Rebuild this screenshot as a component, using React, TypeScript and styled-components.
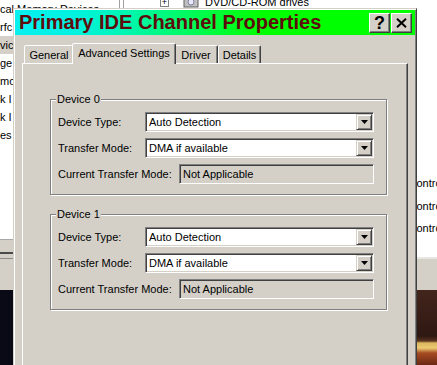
import React from "react";
import styled, { createGlobalStyle } from "styled-components";

const GlobalStyle = createGlobalStyle`
  html, body {
    margin: 0;
    padding: 0;
  }
  body {
    width: 437px;
    height: 365px;
    overflow: hidden;
    font-family: "Liberation Sans", Arial, sans-serif;
    font-size: 11px;
    color: #000;
  }
`;

interface IDeviceRow {
  label: string;
  value: string;
  boxWidth: number;
  readOnly?: boolean;
}

const devices: { name: string; rows: IDeviceRow[] }[] = [0, 1].map((i) => ({
  name: `Device ${i}`,
  rows: [
    { label: "Device Type:", value: "Auto Detection", boxWidth: 229 },
    { label: "Transfer Mode:", value: "DMA if available", boxWidth: 229 },
    { label: "Current Transfer Mode:", value: "Not Applicable", boxWidth: 195, readOnly: true },
  ],
}));

const leftItems = ["cal Memory Devices", "rfc", "vic", "ge", "mo", "k I", "k I", "es"];
const tabs = ["General", "Advanced Settings", "Driver", "Details"];
const tabWidths = [50, 100, 44, 43];

const DropArrow = () => (
  <svg width="7" height="4" viewBox="0 0 7 4">
    <polygon points="0,0 7,0 3.5,4" fill="#000" />
  </svg>
);

const CloseGlyph = () => (
  <svg width="11" height="10" viewBox="0 0 11 10">
    <path d="M1 0.8 L10 9.2 M10 0.8 L1 9.2" stroke="#000" strokeWidth="2" />
  </svg>
);

const DriveIcon = () => (
  <svg width="16" height="16" viewBox="0 0 16 16">
    <rect x="1" y="4" width="14" height="9" fill="#c0c0c0" stroke="#606060" />
    <circle cx="8" cy="8" r="3" fill="#e8e8f8" stroke="#8080a0" />
  </svg>
);

export default function App() {
  return (
    <Desktop>
      <GlobalStyle />
      <ExplorerWindow>
        <ListColumn>
          <ListPane>
            {leftItems.map((item, i) => (
              <ListItem key={i} selected={i === 2}>
                {item}
              </ListItem>
            ))}
          </ListPane>
          <PaneFooter />
        </ListColumn>
        <Splitter />
        <TreeColumn>
          <TreePane>
            <TreeRow>
              <Expander>+</Expander>
              <DriveIcon />
              <span>DVD/CD-ROM drives</span>
            </TreeRow>
            <ControllerList>
              {[0, 1, 2].map((i) => (
                <ControllerRow key={i}>controller</ControllerRow>
              ))}
            </ControllerList>
          </TreePane>
        </TreeColumn>
      </ExplorerWindow>

      <Dialog>
        <TitleBar>
          <Title>Primary IDE Channel Properties</Title>
          <CaptionButtons>
            <CaptionButton>?</CaptionButton>
            <CaptionButton>
              <CloseGlyph />
            </CaptionButton>
          </CaptionButtons>
        </TitleBar>
        <Body>
          <TabRow>
            {tabs.map((tab, i) => (
              <Tab key={tab} active={i === 1} w={tabWidths[i]}>
                {tab}
              </Tab>
            ))}
          </TabRow>
          <TabPanel>
            {devices.map((device) => (
              <GroupBox key={device.name}>
                <Legend>{device.name}</Legend>
                {device.rows.map((row) => (
                  <FieldRow key={row.label}>
                    <span>{row.label}</span>
                    <Field w={row.boxWidth} readOnly={row.readOnly}>
                      <FieldText>{row.value}</FieldText>
                      {!row.readOnly && (
                        <DropButton>
                          <DropArrow />
                        </DropButton>
                      )}
                    </Field>
                  </FieldRow>
                ))}
              </GroupBox>
            ))}
          </TabPanel>
        </Body>
      </Dialog>
    </Desktop>
  );
}

const Desktop = styled.div`
  position: relative;
  width: 437px;
  height: 365px;
  overflow: hidden;
  background:
    linear-gradient(
        to bottom,
        #43251c 0,
        #2e1812 46px,
        #5a3320 51px,
        #dcb75e 53px,
        #ecca72 58px,
        #a64b22 63px,
        #6b2814 75px
      )
      right bottom / 30px 75px no-repeat,
    #0a0a17;
`;

const ExplorerWindow = styled.div`
  position: absolute;
  left: 0;
  top: 0;
  width: 437px;
  height: 290px;
  display: flex;
  background: #d4d0c8;
`;

const ListColumn = styled.div`
  width: 119px;
  flex-shrink: 0;
  display: flex;
  flex-direction: column;
`;

const ListPane = styled.div`
  height: 239px;
  background: #fff;
  border-bottom: 1px solid #a8a8a8;
  overflow: hidden;
`;

const ListItem = styled.div<{ selected?: boolean }>`
  height: 18px;
  line-height: 18px;
  white-space: nowrap;
  background: ${({ selected }) => (selected ? "#d4d0c8" : "transparent")};
`;

const PaneFooter = styled.div`
  margin-top: 12px;
  height: 4px;
  border-top: 2px solid #4a4a4a;
  border-bottom: 1px solid #8c8c8c;
`;

const Splitter = styled.div`
  width: 3px;
  flex-shrink: 0;
  border-left: 1px solid #a0a0a0;
  border-right: 1px solid #a0a0a0;
  background: #fff;
  height: 8px;
`;

const TreeColumn = styled.div`
  flex: 1;
  min-width: 0;
  display: flex;
  flex-direction: column;
`;

const TreePane = styled.div`
  height: 257px;
  background: #fff;
  border-bottom: 2px solid #e8e6e0;
  overflow: hidden;
`;

const TreeRow = styled.div`
  display: flex;
  align-items: center;
  gap: 4px;
  height: 18px;
  margin-top: -7px;
  padding-left: 36px;
  white-space: nowrap;
  span {
    margin-left: 2px;
  }
`;

const Expander = styled.div`
  width: 7px;
  height: 7px;
  border: 1px solid #808080;
  font-size: 9px;
  line-height: 7px;
  text-align: center;
  margin-right: 10px;
`;

const ControllerList = styled.div`
  margin-top: 161px;
  padding-left: 287px;
`;

const ControllerRow = styled.div`
  height: 22.5px;
  line-height: 22px;
  white-space: nowrap;
`;

const Dialog = styled.div`
  position: absolute;
  left: 13px;
  top: 8px;
  width: 404px;
  height: 380px;
  box-sizing: border-box;
  padding: 1px;
  display: flex;
  flex-direction: column;
  background: #d4d0c8;
  border: 1px solid;
  border-color: #d4d0c8 #404040 #404040 #d4d0c8;
  box-shadow: inset 1px 1px 0 #fff, inset -1px -1px 0 #808080;
`;

const TitleBar = styled.div`
  height: 25px;
  display: flex;
  align-items: center;
  justify-content: space-between;
  padding: 0 3px 0 4px;
  background: linear-gradient(
    90deg,
    #08f0f0 0%,
    #02f2e0 15%,
    #00f6b0 28%,
    #00fa70 40%,
    #00fd30 52%,
    #00ff00 62%,
    #00ff00 100%
  );
`;

const Title = styled.span`
  font-size: 20px;
  font-weight: bold;
  color: #5e0b0b;
  white-space: nowrap;
`;

const CaptionButtons = styled.div`
  display: flex;
  gap: 1px;
`;

const CaptionButton = styled.div`
  width: 21px;
  height: 20px;
  box-sizing: border-box;
  display: flex;
  align-items: center;
  justify-content: center;
  background: #d4d0c8;
  border: 1px solid;
  border-color: #fff #404040 #404040 #fff;
  box-shadow: inset -1px -1px 0 #808080;
  font-size: 18px;
  font-weight: bold;
  line-height: 1;
`;

const Body = styled.div`
  flex: 1;
  display: flex;
  flex-direction: column;
  padding: 7px 7px 0;
`;

const TabRow = styled.div`
  display: flex;
  align-items: flex-end;
  padding-left: 2px;
  height: 21px;
`;

const Tab = styled.div<{ active?: boolean; w: number }>`
  position: relative;
  width: ${({ w, active }) => (active ? w + 4 : w)}px;
  height: ${({ active }) => (active ? 21 : 18)}px;
  margin: ${({ active }) => (active ? "0 -2px -1px" : "0")};
  z-index: ${({ active }) => (active ? 1 : 0)};
  box-sizing: border-box;
  display: flex;
  align-items: center;
  justify-content: center;
  padding-bottom: ${({ active }) => (active ? 2 : 0)}px;
  background: #d4d0c8;
  border: 1px solid;
  border-bottom: none;
  border-color: #fff #404040 transparent #fff;
  border-radius: 2px 2px 0 0;
  box-shadow: inset -1px 0 0 #808080;
  white-space: nowrap;
`;

const TabPanel = styled.div`
  flex: 1;
  display: flex;
  flex-direction: column;
  border: 1px solid;
  border-color: #fff #404040 #404040 #fff;
  box-shadow: inset -1px -1px 0 #808080;
`;

const GroupBox = styled.div`
  position: relative;
  width: 337px;
  height: 96px;
  box-sizing: border-box;
  margin: 35px 0 0 27px;
  padding: 12px 12px 10px 7px;
  display: flex;
  flex-direction: column;
  gap: 6px;
  border: 1px solid #808080;
  box-shadow: inset 1px 1px 0 #fff, 1px 1px 0 #fff;
  & + & {
    margin-top: 19px;
  }
`;

const Legend = styled.span`
  position: absolute;
  top: -7px;
  left: 5px;
  padding: 0 1px;
  line-height: 13px;
  background: #d4d0c8;
`;

const FieldRow = styled.div`
  height: 20px;
  display: flex;
  align-items: center;
  justify-content: space-between;
`;

const Field = styled.div<{ w: number; readOnly?: boolean }>`
  width: ${({ w }) => w}px;
  height: 20px;
  box-sizing: border-box;
  display: flex;
  align-items: center;
  padding: 1px;
  background: ${({ readOnly }) => (readOnly ? "#d4d0c8" : "#fff")};
  border: 1px solid;
  border-color: #808080 #fff #fff #808080;
  box-shadow: inset 1px 1px 0 #404040, inset -1px -1px 0 #d4d0c8;
`;

const FieldText = styled.span`
  flex: 1;
  padding-left: 2px;
  white-space: nowrap;
  overflow: hidden;
`;

const DropButton = styled.div`
  width: 16px;
  height: 16px;
  box-sizing: border-box;
  display: flex;
  align-items: center;
  justify-content: center;
  background: #d4d0c8;
  border: 1px solid;
  border-color: #d4d0c8 #404040 #404040 #d4d0c8;
  box-shadow: inset 1px 1px 0 #fff, inset -1px -1px 0 #808080;
`;
